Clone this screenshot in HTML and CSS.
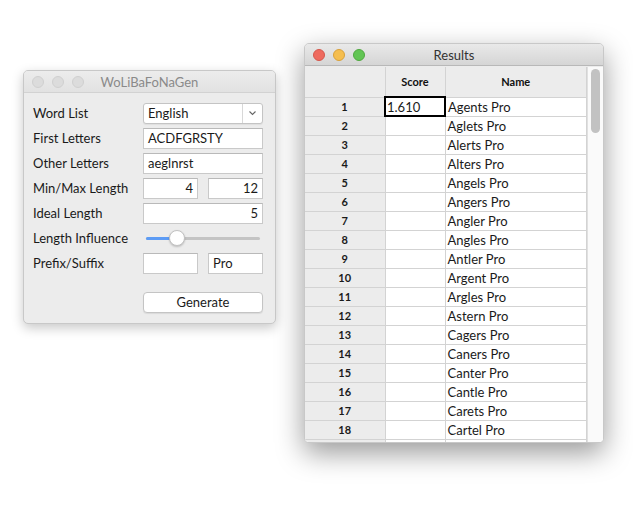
FILE: index.html
```html
<!DOCTYPE html>
<html>
<head>
<meta charset="utf-8">
<link rel="stylesheet" href="styles.css">
</head>
<body>
<div class="desk">
  <div class="win win-gen">
    <div class="titlebar">
      <div class="lights">
        <span class="light grey"></span><span class="light grey"></span><span class="light grey"></span>
      </div>
      <div class="title inactive">WoLiBaFoNaGen</div>
    </div>
    <div class="form">
      <div class="row">
        <label>Word List</label>
        <div class="select"><span class="sel-text">English</span><span class="sel-btn"><svg width="9" height="6" viewBox="0 0 9 6"><path d="M1.5 1.5 L4.5 4.5 L7.5 1.5" fill="none" stroke="#666" stroke-width="1.1"/></svg></span></div>
      </div>
      <div class="row">
        <label>First Letters</label>
        <div class="field">ACDFGRSTY</div>
      </div>
      <div class="row">
        <label>Other Letters</label>
        <div class="field">aeglnrst</div>
      </div>
      <div class="row">
        <label>Min/Max Length</label>
        <div class="pair"><div class="field num">4</div><div class="field num">12</div></div>
      </div>
      <div class="row">
        <label>Ideal Length</label>
        <div class="field num">5</div>
      </div>
      <div class="row">
        <label>Length Influence</label>
        <div class="slider"><div class="track"><div class="fill"></div></div><div class="knob"></div></div>
      </div>
      <div class="row">
        <label>Prefix/Suffix</label>
        <div class="pair"><div class="field"></div><div class="field">Pro</div></div>
      </div>
      <div class="row btnrow">
        <div class="button">Generate</div>
      </div>
    </div>
  </div>

  <div class="win win-res">
    <div class="titlebar">
      <div class="lights">
        <span class="light red"></span><span class="light yellow"></span><span class="light green"></span>
      </div>
      <div class="title">Results</div>
    </div>
    <div class="tablewrap">
      <table class="grid">
        <thead>
          <tr><th class="rh"></th><th class="c-score">Score</th><th class="c-name">Name</th></tr>
        </thead>
        <tbody>
          <tr><td class="rh">1</td><td class="focus">1.610</td><td>Agents Pro</td></tr>
          <tr><td class="rh">2</td><td></td><td>Aglets Pro</td></tr>
          <tr><td class="rh">3</td><td></td><td>Alerts Pro</td></tr>
          <tr><td class="rh">4</td><td></td><td>Alters Pro</td></tr>
          <tr><td class="rh">5</td><td></td><td>Angels Pro</td></tr>
          <tr><td class="rh">6</td><td></td><td>Angers Pro</td></tr>
          <tr><td class="rh">7</td><td></td><td>Angler Pro</td></tr>
          <tr><td class="rh">8</td><td></td><td>Angles Pro</td></tr>
          <tr><td class="rh">9</td><td></td><td>Antler Pro</td></tr>
          <tr><td class="rh">10</td><td></td><td>Argent Pro</td></tr>
          <tr><td class="rh">11</td><td></td><td>Argles Pro</td></tr>
          <tr><td class="rh">12</td><td></td><td>Astern Pro</td></tr>
          <tr><td class="rh">13</td><td></td><td>Cagers Pro</td></tr>
          <tr><td class="rh">14</td><td></td><td>Caners Pro</td></tr>
          <tr><td class="rh">15</td><td></td><td>Canter Pro</td></tr>
          <tr><td class="rh">16</td><td></td><td>Cantle Pro</td></tr>
          <tr><td class="rh">17</td><td></td><td>Carets Pro</td></tr>
          <tr><td class="rh">18</td><td></td><td>Cartel Pro</td></tr>
          <tr><td class="rh"></td><td></td><td></td></tr>
        </tbody>
      </table>
      <div class="scrollbar"><div class="thumb"></div></div>
    </div>
  </div>
</div>
</body>
</html>
```

FILE: styles.css
```css
* { box-sizing: border-box; }
html, body { margin: 0; padding: 0; background: #ffffff; }
body {
  font-family: "Lato", "Noto Sans", sans-serif;
  font-size: 13px;
  color: #1a1a1a;
}
.desk { position: relative; width: 633px; height: 511px; overflow: hidden; }

.win {
  position: absolute;
  background: #ececec;
  border-radius: 5px;
  border: 1px solid #c8c8c8;
  overflow: hidden;
}
.win-gen {
  left: 23px; top: 70px; width: 253px; height: 254px;
  box-shadow: 0 4px 12px rgba(0,0,0,0.22);
}
.win-res {
  left: 304px; top: 43px; width: 300px; height: 400px;
  box-shadow: 0 10px 28px rgba(0,0,0,0.40);
}

.titlebar {
  height: 22px;
  display: flex;
  align-items: center;
  position: relative;
  border-bottom: 1px solid #d2d2d2;
  background: linear-gradient(#ececec, #e2e2e2);
}
.win-res .titlebar {
  background: linear-gradient(#e9e9e9, #d5d5d5);
  border-bottom: 1px solid #b8b8b8;
}
.lights { display: flex; gap: 8px; padding-left: 8px; position: relative; z-index: 1; }
.light { width: 12px; height: 12px; border-radius: 50%; display: block; }
.light.grey { background: #dcdcdc; border: 1px solid #d0d0d0; }
.light.red { background: #ee6a5e; border: 1px solid #d5574c; }
.light.yellow { background: #f5be4f; border: 1px solid #d9a13a; }
.light.green { background: #62c554; border: 1px solid #50a840; }
.title {
  position: absolute; left: 0; right: 0; top: 0; bottom: 0;
  display: flex; align-items: center; justify-content: center;
  font-size: 13px; color: #333;
}
.title.inactive { color: #8a8a8a; }

.form { padding: 10px 12px 0 9px; display: flex; flex-direction: column; gap: 5px; }
.row { display: flex; align-items: center; height: 20px; }
.row label { width: 110px; flex: none; }
.field {
  width: 120px; height: 21px;
  background: #fff;
  border: 1px solid #c9c9c9;
  border-top-color: #b9b9b9;
  padding: 0 4px;
  line-height: 19px;
  white-space: nowrap;
}
.field.num { text-align: right; }
.pair { display: flex; gap: 10px; width: 120px; }
.pair .field { width: 55px; }
.select {
  width: 120px; height: 21px;
  background: #fff;
  border: 1px solid #c4c4c4;
  border-radius: 3px;
  display: flex;
  box-shadow: 0 1px 1px rgba(0,0,0,0.06);
}
.sel-text { flex: 1; padding: 0 4px; line-height: 19px; }
.sel-btn {
  width: 20px; border-left: 1px solid #d8d8d8;
  display: flex; align-items: center; justify-content: center;
}
.slider { position: relative; width: 120px; height: 20px; display: flex; align-items: center; }
.track { margin-left: 3px; width: 114px; height: 3px; border-radius: 2px; background: #c4c4c4; position: relative; }
.fill { width: 30px; height: 3px; border-radius: 2px; background: #5d9cf5; }
.knob {
  position: absolute; left: 26px; top: 2px;
  width: 16px; height: 16px; border-radius: 50%;
  background: #fff; border: 1px solid #c2c2c2;
  box-shadow: 0 1px 2px rgba(0,0,0,0.2);
}
.btnrow { margin-top: 14px; padding-left: 110px; }
.button {
  width: 120px; height: 21px;
  background: #fff;
  border: 1px solid #c4c4c4;
  border-radius: 4px;
  text-align: center;
  line-height: 19px;
  box-shadow: 0 1px 1px rgba(0,0,0,0.08);
}

.tablewrap { position: relative; display: flex; height: 376px; margin-top: 1px; background: #fff; }
.grid {
  border-collapse: collapse;
  width: 283px;
  table-layout: fixed;
  font-size: 13px;
}
.grid th, .grid td {
  border: 1px solid #d3d3d3;
  height: 19px;
  padding: 0 2px;
  white-space: nowrap;
  overflow: hidden;
}
.grid thead th {
  height: 30px;
  background: #ececec;
  font-size: 11px;
  font-weight: 700;
  color: #111;
}
.grid th.rh { width: 80px; }
.grid th.c-score { width: 60px; }
.grid td.rh {
  background: #ececec;
  text-align: center;
  font-size: 11px;
  font-weight: 700;
}
.grid tr:first-child th { border-top: none; }
.grid th:first-child, .grid td:first-child { border-left: none; }
.grid td.focus { border: 2px solid #000; padding: 0 1px; }
.scrollbar {
  width: 16px; flex: none;
  background: #fafafa;
  border-left: 1px solid #e0e0e0;
  padding: 2px 3px;
}
.thumb { width: 9px; height: 64px; border-radius: 5px; background: #c2c2c2; }
```
